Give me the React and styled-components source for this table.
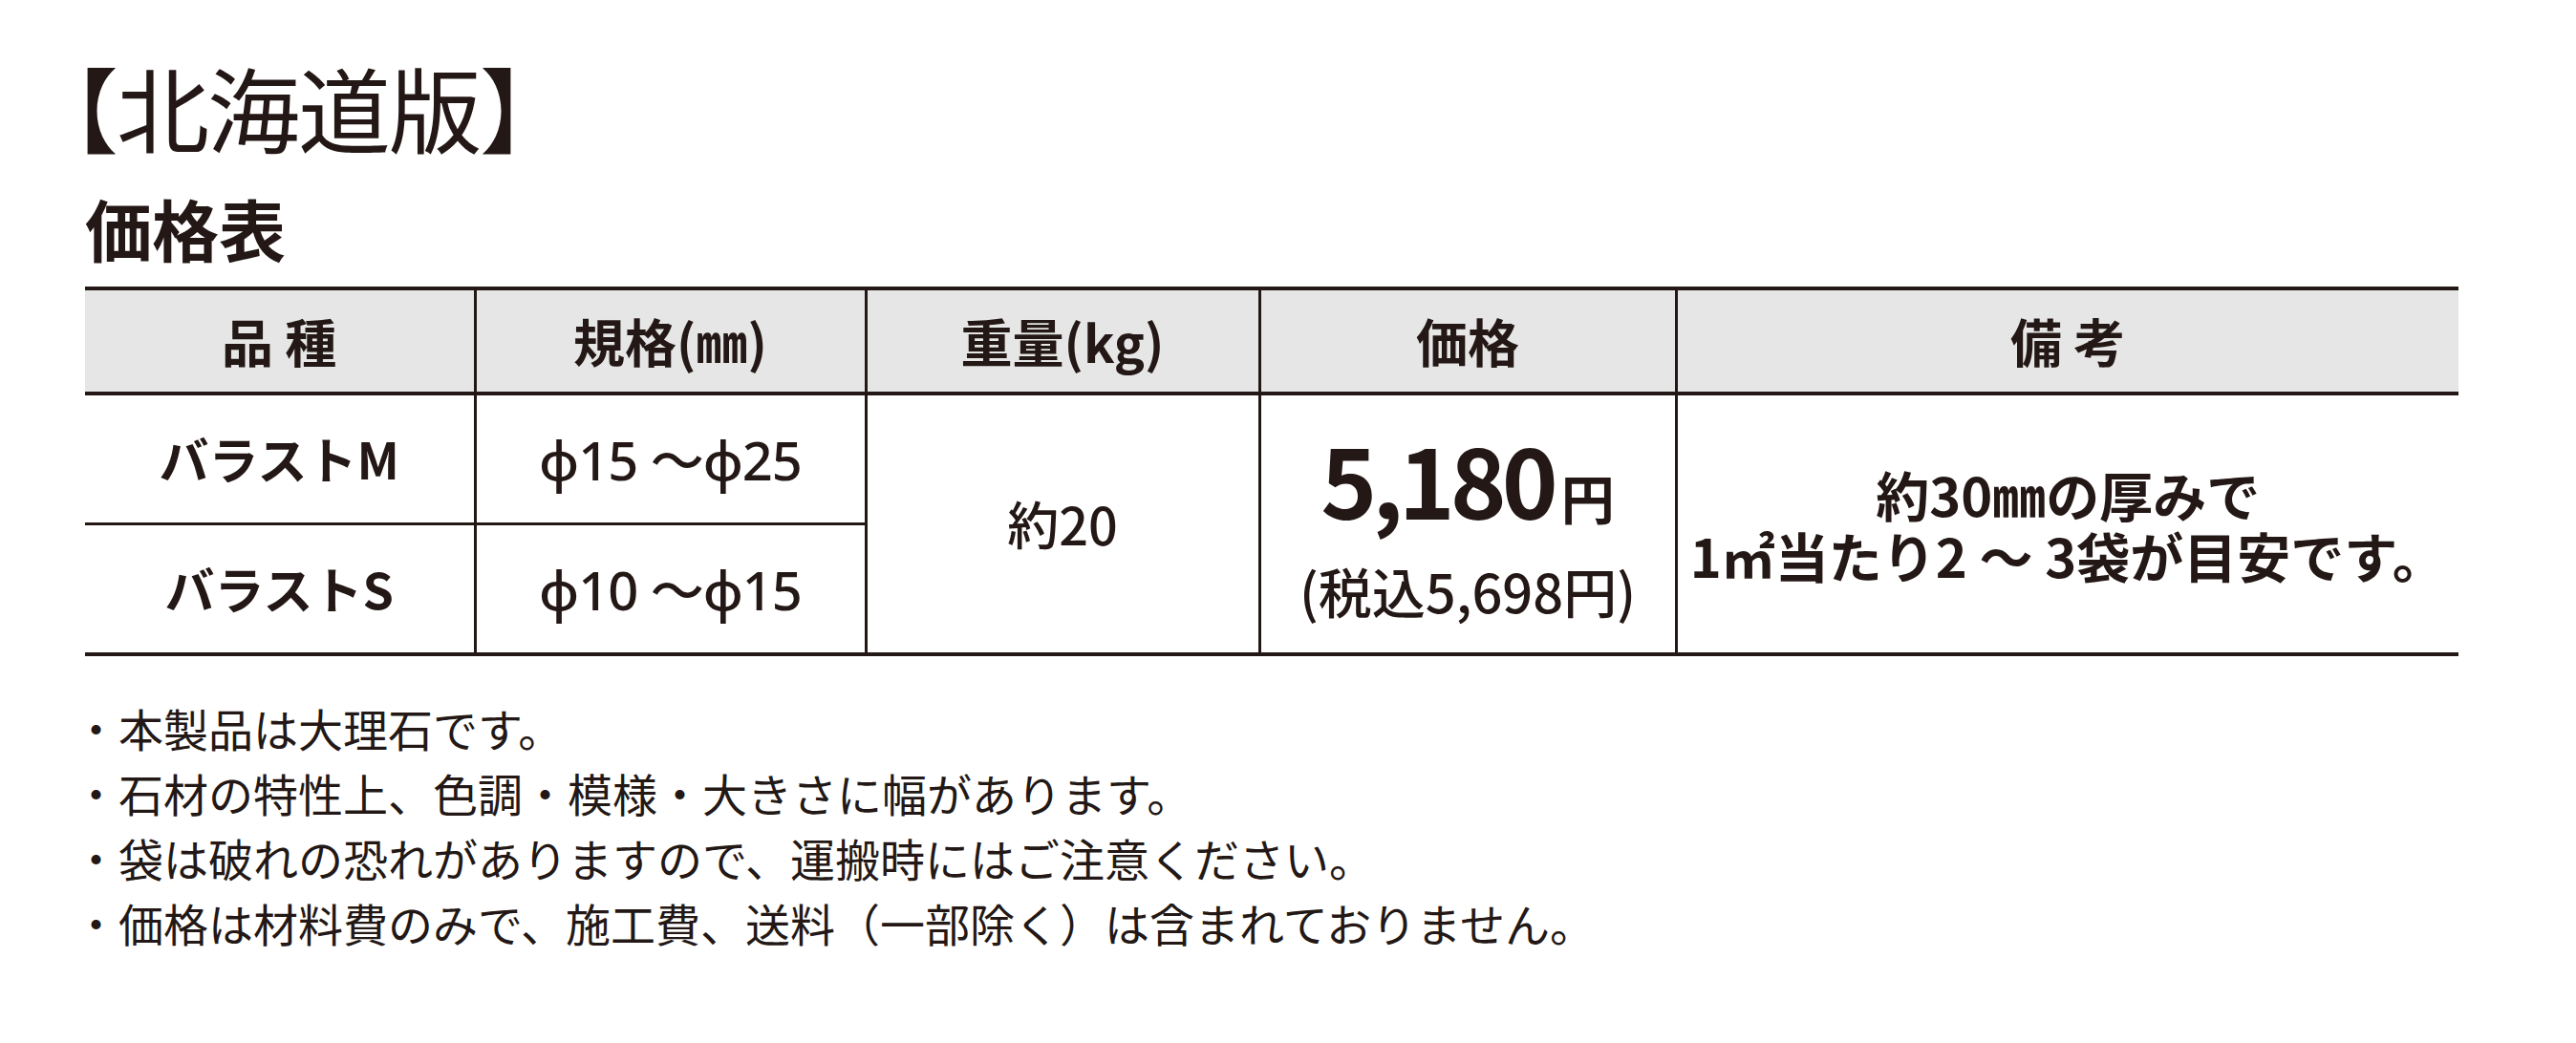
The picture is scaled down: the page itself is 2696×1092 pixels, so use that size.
import React from "react";
import styled, { createGlobalStyle } from "styled-components";

const INK = "#231815";

const GlobalStyle = createGlobalStyle`
  html, body { margin: 0; padding: 0; background: #ffffff; }
  body {
    font-family: "Noto Sans CJK JP", "Noto Sans", sans-serif;
    color: ${INK};
  }
`;

const Page = styled.main`
  padding: 62px 0 0 89px;
  width: 2484px;
`;

const Title = styled.h1`
  margin: 0 0 0 -62px;
  font-size: 97px;
  line-height: 1;
  font-weight: 400;
  letter-spacing: -2px;
`;

const Subtitle = styled.h2`
  margin: 45px 0 0;
  font-size: 70px;
  line-height: 1;
  font-weight: 700;
`;

const Table = styled.table`
  margin-top: 26px;
  width: 2484px;
  border-collapse: collapse;
  table-layout: fixed;
`;

const HeadCell = styled.th`
  height: 106px;
  padding: 0;
  background: #e6e6e6;
  border-top: 4px solid ${INK};
  border-bottom: 4px solid ${INK};
  border-left: 3px solid ${INK};
  font-size: 54px;
  font-weight: 700;
  line-height: 1;
  text-align: center;
  &:first-child { border-left: none; }
`;

const BodyCell = styled.td`
  height: 133px;
  padding: 0;
  border-left: 3px solid ${INK};
  border-bottom: ${(p) => (p.$divider ? "3px" : "4px")} solid ${INK};
  text-align: center;
  vertical-align: middle;
  &:first-child { border-left: none; }
`;

const ItemName = styled.span`
  font-size: 52px;
  font-weight: 700;
  line-height: 1;
`;

const SizeRange = styled.span`
  font-family: "Noto Sans", "Noto Sans CJK JP", sans-serif;
  font-size: 56px;
  font-weight: 500;
  letter-spacing: -1px;
  line-height: 1;
`;

const WeightText = styled.span`
  font-size: 54px;
  font-weight: 500;
  line-height: 1;
`;

const PriceBlock = styled.div`
  display: flex;
  flex-direction: column;
  align-items: center;
  gap: 39px;
`;

const PriceMain = styled.div`
  font-size: 100px;
  font-weight: 700;
  line-height: 1;
  letter-spacing: -5px;
  white-space: nowrap;
`;

const PriceUnit = styled.span`
  font-size: 56px;
  letter-spacing: 0;
  margin-left: 8px;
`;

const PriceTax = styled.div`
  font-size: 56px;
  font-weight: 500;
  line-height: 1;
  white-space: nowrap;
`;

const Remarks = styled.div`
  display: flex;
  flex-direction: column;
  align-items: center;
`;

const RemarkLine = styled.div`
  font-size: 56px;
  font-weight: 700;
  line-height: 64px;
  height: 64px;
  white-space: nowrap;
`;

const Notes = styled.ul`
  margin: 41px 0 0 -12px;
  padding: 0;
  list-style: none;
`;

const Note = styled.li`
  font-size: 47px;
  line-height: 68px;
  font-weight: 400;
  white-space: nowrap;
  &::before { content: "・"; }
`;

const columns = [408, 409, 412, 436, 819];

const notes = [
  "本製品は大理石です。",
  "石材の特性上、色調・模様・大きさに幅があります。",
  "袋は破れの恐れがありますので、運搬時にはご注意ください。",
  "価格は材料費のみで、施工費、送料（一部除く）は含まれておりません。",
];

export default function App() {
  return (
    <>
      <GlobalStyle />
      <Page>
        <Title>【北海道版】</Title>
        <Subtitle>価格表</Subtitle>
        <Table>
          <colgroup>
            {columns.map((w, i) => (
              <col key={i} style={{ width: `${w}px` }} />
            ))}
          </colgroup>
          <thead>
            <tr>
              <HeadCell>品 種</HeadCell>
              <HeadCell>規格(㎜)</HeadCell>
              <HeadCell>重量(kg)</HeadCell>
              <HeadCell>価格</HeadCell>
              <HeadCell>備 考</HeadCell>
            </tr>
          </thead>
          <tbody>
            <tr>
              <BodyCell $divider>
                <ItemName>バラストM</ItemName>
              </BodyCell>
              <BodyCell $divider>
                <SizeRange>ϕ15 〜ϕ25</SizeRange>
              </BodyCell>
              <BodyCell rowSpan={2}>
                <WeightText>約20</WeightText>
              </BodyCell>
              <BodyCell rowSpan={2}>
                <PriceBlock>
                  <PriceMain>
                    5,180<PriceUnit>円</PriceUnit>
                  </PriceMain>
                  <PriceTax>(税込5,698円)</PriceTax>
                </PriceBlock>
              </BodyCell>
              <BodyCell rowSpan={2}>
                <Remarks>
                  <RemarkLine>約30㎜の厚みで</RemarkLine>
                  <RemarkLine>1㎡当たり2 〜 3袋が目安です。</RemarkLine>
                </Remarks>
              </BodyCell>
            </tr>
            <tr>
              <BodyCell>
                <ItemName>バラストS</ItemName>
              </BodyCell>
              <BodyCell>
                <SizeRange>ϕ10 〜ϕ15</SizeRange>
              </BodyCell>
            </tr>
          </tbody>
        </Table>
        <Notes>
          {notes.map((n) => (
            <Note key={n}>{n}</Note>
          ))}
        </Notes>
      </Page>
    </>
  );
}
